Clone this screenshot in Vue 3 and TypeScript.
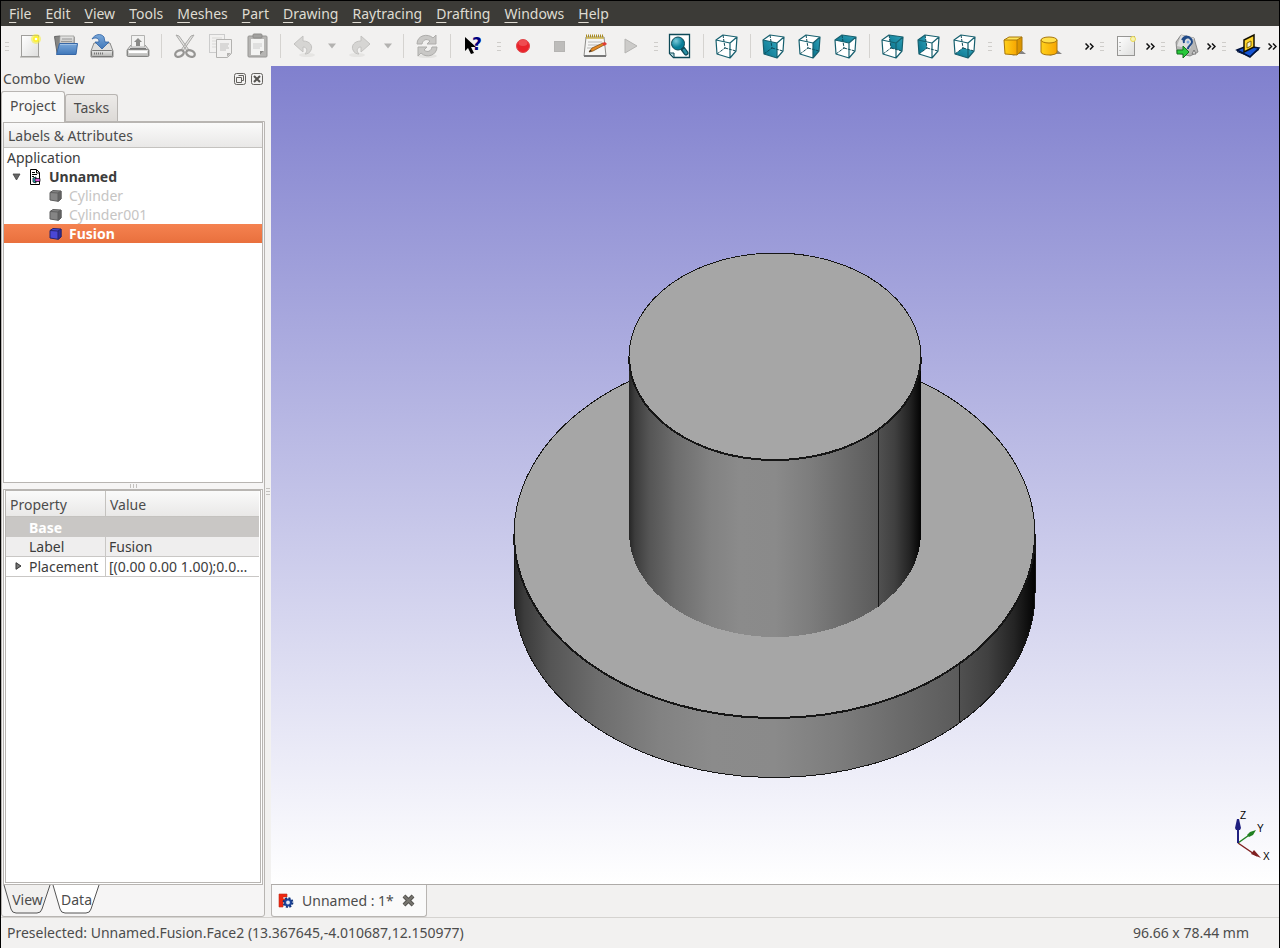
<script setup lang="ts">
import { ref } from 'vue'

type ToolKind = 'icon' | 'sep' | 'drop'
interface Tool { kind: ToolKind; name: string }
interface ToolGroup { id: string; tools: Tool[]; more?: boolean; wide?: boolean }

const menus: string[] = ['File', 'Edit', 'View', 'Tools', 'Meshes', 'Part', 'Drawing', 'Raytracing', 'Drafting', 'Windows', 'Help']

const parse = (spec: string): Tool[] =>
  spec.split(' ').map((name) => ({ kind: name === '|' ? 'sep' : name === 'v' ? 'drop' : 'icon', name }))

const groups: ToolGroup[] = [
  { id: 'file', tools: parse('new open save print | cut copy paste | undo v redo v | refresh | help') },
  { id: 'macro', tools: parse('record stop edit play') },
  { id: 'view', tools: parse('fit | axo | front right top | rear left bottom') },
  { id: 'part', tools: parse('box cylinder'), more: true, wide: true },
  { id: 'drawing', tools: parse('page'), more: true },
  { id: 'ray', tools: parse('export'), more: true },
  { id: 'draft', tools: parse('plane'), more: true }
]

const cubeFaces: Record<string, string> = {
  axo: '',
  front: '1,6 15,9 15,24 2,20',
  right: '15,9 22,3 21,17 15,24',
  top: '1,6 8,1 22,3 15,9',
  rear: '8,1 22,3 21,17 10,14',
  left: '1,6 8,1 10,14 2,20',
  bottom: '2,20 10,14 21,17 15,24'
}

const leftTab = ref<string>('Project')
const propTab = ref<string>('Data')
const expanded = ref<boolean>(true)
const selected = ref<string>('Fusion')
const parts: string[] = ['Cylinder', 'Cylinder001', 'Fusion']
</script>

<template>
  <div class="window">
    <nav class="menubar" aria-label="Main menu">
      <button v-for="m in menus" :key="m" type="button" class="menu"><span class="key">{{ m[0] }}</span>{{ m.slice(1) }}</button>
    </nav>

    <div class="toolbars">
      <div v-for="g in groups" :key="g.id" class="group" role="toolbar" :aria-label="g.id">
        <span class="handle"><i></i><i></i><i></i></span>
        <template v-for="(t, i) in g.tools" :key="i">
          <span v-if="t.kind === 'sep'" class="sep"></span>
          <button v-else-if="t.kind === 'drop'" type="button" class="drop" aria-label="History">
            <svg width="10" height="6" viewBox="0 0 10 6"><path d="M1 .5h8L5 5.5z" fill="#b3b2b0" /></svg>
          </button>
          <button v-else type="button" class="tool" :aria-label="t.name">
            <svg v-if="t.name in cubeFaces" width="24" height="25" viewBox="0 0 24 25">
              <path d="M1 6 8 1 22 3 21 17 15 24 2 20z" fill="#fff" />
              <polygon v-if="cubeFaces[t.name]" :points="cubeFaces[t.name]" fill="url(#teal)" />
              <path d="M8 1 10 14 2 20M10 14 21 17" fill="none" stroke="#0d4957" stroke-width="1" stroke-dasharray="3 1" />
              <path d="M1 6 8 1 22 3 21 17 15 24 2 20zM1 6 15 9 22 3M15 9V24" fill="none" stroke="#17606f" stroke-width="1.2" stroke-linejoin="round" />
            </svg>
            <svg v-else width="28" height="28" viewBox="0 0 28 28">
              <template v-if="t.name === 'new'">
                <path d="M4 25h20" stroke="#c9c8c5" stroke-width="2" />
                <rect x="5.500" y="3.500" width="17" height="21" fill="url(#paper)" stroke="#a09f9c" />
                <circle cx="20" cy="7" r="5" fill="#f7ef32" opacity=".55" /><circle cx="20" cy="7" r="3" fill="#fff22d" /><circle cx="20" cy="7" r="1.300" fill="#fff" />
              </template>
              <template v-else-if="t.name === 'open'">
                <path d="M2.500 4.500 8 4l1 1h13v16H5z" fill="#858583" stroke="#666" />
                <path d="M8 4h14v10H7z" fill="url(#grey)" stroke="#8a8a88" stroke-width=".7" /><path d="M10 7h10M9 9.500h11" stroke="#999" />
                <path d="M7.500 11.500H25.500L24 22.500H4.500z" fill="url(#blue)" stroke="#3767a6" stroke-linejoin="round" />
                <path d="M8 12.500H24.500" stroke="#9fc0e4" />
              </template>
              <template v-else-if="t.name === 'save'">
                <path d="m6 11h16l3 8v6H3v-6z" fill="#dfdfde" stroke="#8a8a89" stroke-linejoin="round" />
                <rect x="3.500" y="18.500" width="21" height="6" rx="1" fill="url(#grey)" stroke="#777775" />
                <path d="M6 21.500h10" stroke="#777" stroke-width="2" stroke-dasharray="1 1" />
                <path d="M4 7C7 2 13 1 16 5l1 5h4l-7 7-7-7h4c0-4-3-5-7-3z" fill="url(#blue)" stroke="#2e62a5" stroke-width=".8" />
              </template>
              <template v-else-if="t.name === 'print'">
                <path d="M7 13h14l4 5v6H3v-6z" fill="#ddd" stroke="#969694" stroke-linejoin="round" />
                <rect x="3.500" y="17.500" width="21" height="7" rx="1" fill="url(#grey)" stroke="#858583" />
                <path d="M5 20h18" stroke="#fff" stroke-width="2" />
                <path d="M7.500 3.500h13V15h-13z" fill="#f2f2f1" stroke="#b3b3b1" />
                <path d="m14 6 4 4h-2v4h-4v-4h-2z" fill="#898987" /><path d="M6 16.500h16" stroke="#777" />
              </template>
              <template v-else-if="t.name === 'cut'">
                <path d="m5 3 11 16 2-1L8 4zM23 3 12 19l-2-1L20 4z" fill="#e4e4e2" stroke="#aaa9a7" />
                <ellipse cx="8.500" cy="21.500" rx="4.500" ry="3" fill="none" stroke="#969593" stroke-width="2.300" transform="rotate(-25 8.500 21.500)" />
                <ellipse cx="19.500" cy="21.500" rx="4.500" ry="3" fill="none" stroke="#969593" stroke-width="2.300" transform="rotate(25 19.500 21.500)" />
              </template>
              <template v-else-if="t.name === 'copy'">
                <rect x="2.500" y="2.500" width="15" height="18" fill="#f2f1f0" stroke="#ccc" /><path d="M5 6h10M5 9h10M5 12h10M5 15h10" stroke="#dad9d7" />
                <path d="M9.500 7.500h15v14l-4 4h-11z" fill="#f2f1f0" stroke="#b3b2b0" /><path d="M13 12h9M13 14h8M13 16h9M13 18h6" stroke="#d1d0ce" stroke-width="1.500" /><path d="m24 21-4 4v-4z" fill="#b3b2b0" />
              </template>
              <template v-else-if="t.name === 'paste'">
                <rect x="5" y="4" width="19" height="21" rx="1" fill="#b6b5b3" stroke="#979694" />
                <path d="M8 7h13v12l-4 4H8z" fill="#f3f3f2" /><path d="M10 12h9M10 14h9M10 16h7" stroke="#ccc" /><path d="m21 19-4 4v-4z" fill="#8d8c8a" />
                <rect x="10" y="2" width="9" height="4" rx="1" fill="#a2a19f" stroke="#8d8c8a" />
              </template>
              <template v-else-if="t.name === 'undo' || t.name === 'redo'">
                <g :class="{ flip: t.name === 'redo' }">
                  <ellipse cx="17" cy="23" rx="8" ry="2" fill="#e6e5e3" />
                  <path d="m4 12 9-8v5c7 0 10 5 8 9-1 3-4 4-6 4 3-3 2-7-2-7v5z" fill="#d6d5d3" stroke="#c3c2c0" stroke-linejoin="round" />
                </g>
              </template>
              <template v-else-if="t.name === 'refresh'">
                <ellipse cx="14" cy="24" rx="10" ry="2" fill="#e4e3e1" />
                <path d="M4 12C4 3 15 1 20 6l3-3v9h-9l3-3c-4-3-7-1-8 3z" fill="#c9c8c6" stroke="#aeadab" />
                <path d="M24 15c0 8-10 12-16 6l-3 3v-9h9l-3 3c4 3 7 1 8-3z" fill="#c9c8c6" stroke="#aeadab" />
              </template>
              <template v-else-if="t.name === 'help'">
                <path d="M5 5v14l3-3 3 6 3-1-3-6h5z" fill="#000" />
                <text x="12" y="18" class="q">?</text>
              </template>
              <template v-else-if="t.name === 'record'">
                <circle cx="14" cy="14" r="6.500" fill="#e9232b" stroke="#e0474b" /><ellipse cx="14" cy="11" rx="4.500" ry="3" fill="#f4686b" opacity=".6" />
              </template>
              <rect v-else-if="t.name === 'stop'" x="9.500" y="9.500" width="10" height="10" fill="#bdbcba" stroke="#b5b4b2" />
              <template v-else-if="t.name === 'edit'">
                <path d="M5 5h18l2 19H3z" fill="#f5f5f4" stroke="#8c8b88" /><path d="M3 24h22" stroke="#777" stroke-width="2" />
                <path d="M5 4h18" stroke="#a88a22" stroke-width="3" stroke-dasharray="1 1" /><path d="M5 6h18" stroke="#ccb34b" stroke-width="1.500" />
                <path d="M7 10h14M7 13h12M6 16h6" stroke="#b9b9b8" />
                <path d="m8 20 3-4 11-5 1 2-11 6z" fill="#e78a22" stroke="#83521a" stroke-width=".8" /><path d="m21 11 3-1 2 2-3 2z" fill="#df3c35" /><path d="m8 20 1-2 2 1z" fill="#222" />
              </template>
              <path v-else-if="t.name === 'play'" d="m8 7 12 7-12 7z" fill="#cccbc9" stroke="#b5b4b2" stroke-linejoin="round" />
              <template v-else-if="t.name === 'fit'">
                <path d="M3.500 2.500h20v23h-16l-4-4z" fill="#fff" stroke="#0d4957" stroke-width="1.300" /><path d="M3 21h5v5z" fill="#b5d6dd" stroke="#0d4957" />
                <path d="m17 17 3 4" stroke="#0d4957" stroke-width="5" stroke-linecap="round" /><path d="m18 18 2 3" stroke="#2990a5" stroke-width="2.500" stroke-linecap="round" />
                <circle cx="12" cy="11.500" r="6.500" fill="url(#lens)" stroke="#0d4957" />
              </template>
              <template v-else-if="t.name === 'box'">
                <path d="m12 24 7-2h7l-5-4z" fill="#696866" opacity=".8" />
                <path d="M4 8h13v15L5 22z" fill="url(#gold)" /><path d="m4 8 5-3h13l-5 3z" fill="#ffe55a" /><path d="m17 8 5-3v13l-5 5z" fill="#dc9500" />
                <path d="M4 8 9 5h13v13l-5 5-12-1zM4 8h13v15M17 8l5-3" fill="none" stroke="#a8760a" stroke-linejoin="round" />
              </template>
              <template v-else-if="t.name === 'cylinder'">
                <path d="m13 24 7-2h6l-5-4z" fill="#696866" opacity=".8" />
                <path d="M5 8v12c0 4 16 4 16 0V8z" fill="url(#gold)" stroke="#a8760a" /><ellipse cx="13" cy="8" rx="8" ry="3" fill="#ffe04c" stroke="#a8760a" />
              </template>
              <template v-else-if="t.name === 'page'">
                <rect x="5.500" y="4.500" width="17" height="19" fill="url(#paper)" stroke="#979694" /><path d="M8 10v1M8 14v1M8 18v1" stroke="#888" />
                <circle cx="21" cy="7" r="2.500" fill="#f7f3b4" stroke="#ead951" />
              </template>
              <template v-else-if="t.name === 'export'">
                <path d="M8 3 21 6l4 14-8 4L4 21 3 10z" fill="#b7b7b6" stroke="#777" stroke-width=".8" /><path d="m8 3 13 3-4 11L4 14z" fill="#dedede" />
                <path d="M11 11c-2-6 8-8 8-1 0 3-4 3-4 7M9 8c3-5 8-4 9 0" fill="none" stroke="#204a87" stroke-width="2" /><circle cx="15" cy="10" r="1.500" fill="#7aa5db" />
                <path d="m19 22 2-4 2 4z" fill="#eee" stroke="#777" />
                <path d="M4 18h6v-4l6 6-6 6v-4H4z" fill="#27c83a" stroke="#14701f" />
              </template>
              <template v-else-if="t.name === 'plane'">
                <path d="m3 18 10-4 12 2-9 9z" fill="#1554d4" stroke="#00113a" stroke-width="1.500" /><path d="m3 19 13 5 9-8v2l-9 7-13-5z" fill="#001640" />
                <path d="M10 8 20 3v12l-10 5z" fill="#ffd52b" stroke="#171300" stroke-width="1.500" /><path d="m13 11 4-2v5l-4 2z" fill="#f2f0dc" stroke="#806600" />
              </template>
            </svg>
          </button>
        </template>
        <button v-if="g.more" type="button" class="more" :class="{ wide: g.wide }" aria-label="More tools">
          <svg width="9" height="7" viewBox="0 0 9 7"><path d="m.5.500 3 3-3 3M5 .500l3 3-3 3" fill="none" stroke="#111" stroke-width="1.500" /></svg>
        </button>
      </div>
    </div>

    <div class="body">
      <aside class="combo">
        <header class="dockhead">
          <h2>Combo View</h2>
          <button type="button" class="dockbtn" aria-label="Float"><svg width="12" height="12" viewBox="0 0 12 12"><rect x=".5" y=".5" width="11" height="11" rx="2" fill="none" stroke="#65635f" /><path d="M4.500 2.500h5v5h-2M2.500 4.500h5v5h-5z" fill="none" stroke="#65635f" /></svg></button>
          <button type="button" class="dockbtn" aria-label="Close"><svg width="12" height="12" viewBox="0 0 12 12"><rect x=".5" y=".5" width="11" height="11" rx="2" fill="none" stroke="#65635f" /><path d="m3 3 6 6M9 3 3 9" stroke="#55534f" stroke-width="2" /></svg></button>
        </header>
        <div class="tabs" role="tablist">
          <button v-for="t in ['Project', 'Tasks']" :key="t" type="button" role="tab" class="tab" :class="{ on: leftTab === t }" :aria-selected="leftTab === t" @click="leftTab = t">{{ t }}</button>
        </div>
        <div class="pane">
          <section class="tree">
            <div class="colhead">Labels &amp; Attributes</div>
            <ul role="tree">
              <li role="treeitem" class="row root">Application</li>
              <li role="treeitem" class="row doc" :aria-expanded="expanded">
                <button type="button" class="twist" aria-label="Toggle Unnamed" @click="expanded = !expanded"><svg width="9" height="8" viewBox="0 0 9 8"><path d="M1 1h7L4.500 7z" fill="#666" stroke="#444" stroke-width=".8" /></svg></button>
                <svg width="12" height="16" viewBox="0 0 12 16"><path d="M1.500.500h6l3 3v12h-9z" fill="#fff" stroke="#000" /><path d="M7.500 1v3h3M3 3.500h3M3 5.500h5M3 7.500h2" fill="none" stroke="#000" /><path d="M7 8 4 9v4l3 1z" fill="#31c4cf" stroke="#000" stroke-width=".7" /><path d="M6 9.500h5v3H6z" fill="#db58dc" stroke="#000" stroke-width=".7" /></svg>
                <b>Unnamed</b>
              </li>
              <template v-if="expanded">
                <li v-for="p in parts" :key="p" role="treeitem" class="row part" :class="{ selected: selected === p }" :aria-selected="selected === p" @click="selected = p">
                  <svg width="13" height="12" viewBox="0 0 13 12" :class="{ solid: p === 'Fusion' }" class="cube"><path d="m1 2.500 3-2 8 .5V9l-3 2.300L1 10z" /><path class="side" d="m9 3 3-2v8l-3 2.300z" /><path d="m1 2.500 8 .500" /></svg>
                  <span>{{ p }}</span>
                </li>
              </template>
            </ul>
          </section>
          <div class="splitter"><i></i><i></i><i></i></div>
          <section class="props">
            <table>
              <thead><tr><th scope="col">Property</th><th scope="col">Value</th></tr></thead>
              <tbody>
                <tr class="cat"><th colspan="2" scope="rowgroup">Base</th></tr>
                <tr class="alt"><td>Label</td><td>Fusion</td></tr>
                <tr><td><button type="button" class="expand" aria-label="Expand Placement"><svg width="7" height="8" viewBox="0 0 7 8"><path d="M1 .700 6 4 1 7.300z" fill="#777" stroke="#333" /></svg></button>Placement</td><td>[(0.00 0.00 1.00);0.0…</td></tr>
              </tbody>
            </table>
          </section>
          <div class="lowtabs" role="tablist">
            <button v-for="t in ['View', 'Data']" :key="t" type="button" role="tab" class="low" :class="{ on: propTab === t }" :aria-selected="propTab === t" @click="propTab = t">
              <svg width="48" height="30" viewBox="0 0 48 30"><path class="shape" d="M1 0 8 24q1 4 5 4h21q4 0 5-4L47 0" /></svg>
              <span>{{ t }}</span>
            </button>
          </div>
        </div>
      </aside>
      <div class="vsplit"><i></i><i></i><i></i></div>

      <main class="work">
        <div class="scene">
          <svg class="model" viewBox="271 66 1008 818" role="img" aria-label="Fusion of two cylinders">
            <defs>
              <linearGradient id="wall" x1="0" x2="1">
                <stop offset="0" stop-color="#262626" /><stop offset=".02" stop-color="#3c3c3c" /><stop offset=".07" stop-color="#555" /><stop offset=".16" stop-color="#6d6d6d" />
                <stop offset=".28" stop-color="#828282" /><stop offset=".38" stop-color="#8b8b8b" /><stop offset=".5" stop-color="#8a8a8a" />
                <stop offset=".62" stop-color="#7d7d7d" /><stop offset=".74" stop-color="#6b6b6b" /><stop offset=".853" stop-color="#5b5b5b" />
                <stop offset=".856" stop-color="#505050" /><stop offset=".91" stop-color="#404040" /><stop offset=".96" stop-color="#242424" /><stop offset="1" stop-color="#030303" />
              </linearGradient>
              <linearGradient id="teal" x1="1" y1="0" x2="0" y2="1"><stop offset="0" stop-color="#2fa3bb" /><stop offset="1" stop-color="#08718a" /></linearGradient>
              <radialGradient id="lens" cx=".35" cy=".3"><stop offset="0" stop-color="#7acadb" /><stop offset="1" stop-color="#087e98" /></radialGradient>
              <linearGradient id="paper" x1="0" y1="0" x2="1" y2="1"><stop offset="0" stop-color="#fff" /><stop offset="1" stop-color="#dededd" /></linearGradient>
              <linearGradient id="grey" x2="0" y2="1"><stop offset="0" stop-color="#e8e8e7" /><stop offset="1" stop-color="#b3b3b1" /></linearGradient>
              <linearGradient id="blue" x2="0" y2="1"><stop offset="0" stop-color="#7aa8da" /><stop offset="1" stop-color="#3f77b9" /></linearGradient>
              <linearGradient id="gold"><stop offset="0" stop-color="#ffd21c" /><stop offset="1" stop-color="#f7a500" /></linearGradient>
            </defs>
            <g shape-rendering="crispEdges">
              <path d="M514 534V593A260.500 184.500 0 0 0 1035 593V534z" fill="url(#wall)" stroke="#161616" />
              <ellipse cx="774.500" cy="534" rx="260.500" ry="184" fill="#a6a6a6" stroke="#161616" />
              <path d="M514 534A260.500 184 0 0 0 1035 534" fill="none" stroke="#161616" stroke-width="2" />
              <path d="M959.500 664V723" stroke="#161616" />
              <path d="M629 356V533A146 104 0 0 0 921 533V356z" fill="url(#wall)" />
              <ellipse cx="775" cy="356.500" rx="146" ry="103.500" fill="#a6a6a6" stroke="#161616" />
              <path d="M629 356.500A146 103.500 0 0 0 921 356.500" fill="none" stroke="#161616" stroke-width="2" />
              <path d="M878.500 430V607" stroke="#161616" />
            </g>
          </svg>
          <svg class="axes" width="44" height="58" viewBox="0 0 44 58" aria-label="Axis cross">
            <path d="M7 33 26 46" stroke="#802020" stroke-width="1.500" /><path d="m20 44 3-4 7 8z" fill="#802020" />
            <path d="m7 33 14-10" stroke="#208020" stroke-width="1.500" /><path d="m16 25 3-3 6-2-3 5-4 2z" fill="#208020" />
            <path d="M7 33V11" stroke="#202080" stroke-width="2" /><path d="M4 18 6 9h2l2 9-1 2H5z" fill="#202080" />
            <text x="9" y="9">Z</text><text x="26" y="22">Y</text><text x="32" y="50">X</text>
          </svg>
        </div>
        <div class="doctabs">
          <div class="doctab">
            <svg width="16" height="16" viewBox="0 0 16 16"><path d="M1 1h8v3H5v2h4v3H5v5H1z" fill="#f0260f" stroke="#b8301f" stroke-width=".6" /><circle cx="10" cy="9.500" r="3" fill="#e4e9f6" stroke="#1d469c" stroke-width="2.200" /><circle cx="10" cy="9.500" r="4.500" fill="none" stroke="#12347c" stroke-width="1.800" stroke-dasharray="2 1.530" /></svg>
            <a href="#unnamed">Unnamed : 1*</a>
            <button type="button" class="close" aria-label="Close document"><svg width="13" height="13" viewBox="0 0 13 13"><path d="m2 2 9 9M11 2l-9 9" stroke="#555450" stroke-width="4" /><path d="m2 2 9 9M11 2l-9 9" stroke="#77756f" stroke-width="2" /></svg></button>
          </div>
        </div>
      </main>
    </div>

    <footer class="status">
      <span>Preselected: Unnamed.Fusion.Face2 (13.367645,-4.010687,12.150977)</span>
      <span class="dims">96.66 x 78.44 mm</span>
    </footer>
  </div>
</template>

<style>
html, body { margin: 0; background: #000; }
</style>

<style scoped>
.window { box-sizing: border-box; min-height: 100vh; display: flex; flex-direction: column; border: 1px solid #000; background: #f2f1f0; color: #4c4c4c; font: 14px/19px "Noto Sans", "Open Sans", sans-serif; }
button { margin: 0; padding: 0; border: 0; background: none; color: inherit; font: inherit; }
svg { display: block; flex: none; }
.menubar { display: flex; height: 25px; padding-left: 1px; background: #3c3b37; color: #dfdbd2; }
.menu { padding: 0 7px; line-height: 24px; }
.key { text-decoration: underline; text-decoration-thickness: 1px; text-underline-offset: 3px; }
.toolbars { display: flex; height: 40px; overflow: hidden; }
.group { display: flex; align-items: center; }
.handle { width: 13px; display: flex; flex-direction: column; align-items: center; gap: 3px; }
.group:first-child .handle { width: 11px; }
.handle i { width: 4px; height: 1px; background: #cfcdca; }
.tool { width: 36px; height: 36px; display: flex; align-items: center; justify-content: center; }
.sep { width: 1px; height: 24px; margin: 0 5px; background: #d5d3d0; }
.drop { width: 20px; display: flex; justify-content: center; }
.more { width: 12px; display: flex; justify-content: center; }
.more.wide { margin-left: 15px; }
.flip { transform: matrix(-1, 0, 0, 1, 28, 0); }
.q { font: bold 17px "DejaVu Sans", sans-serif; fill: #000080; }
.body { flex: 1; display: flex; min-height: 0; }
.combo { width: 264px; display: flex; flex-direction: column; }
.dockhead { display: flex; align-items: center; height: 25px; padding: 0 2px; gap: 5px; }
.dockhead h2 { flex: 1; margin: 0; font-size: 14px; font-weight: 400; }
.tabs { display: flex; align-items: flex-end; height: 30px; }
.tab { box-sizing: border-box; height: 27px; padding: 0 8px 2px; border: 1px solid #b8b5b2; border-bottom: 0; border-radius: 3px 3px 0 0; background: linear-gradient(#eceae8, #dddad7); }
.tab.on { height: 31px; margin-bottom: -1px; padding-bottom: 4px; background: #f9f9f8; position: relative; }
.pane { flex: 1; display: flex; flex-direction: column; border: 1px solid #b8b5b2; border-radius: 0 0 3px 3px; padding: 0 1px; background: #f6f5f5; }
.tree { height: 359px; border: 1px solid #b8b5b2; background: #fff; }
.colhead { box-sizing: border-box; height: 25px; padding: 3px 4px 2px; border-bottom: 1px solid #c4c2bf; background: linear-gradient(#fafafa, #e9e8e7); }
ul { margin: 0; padding: 0; list-style: none; }
.row { display: flex; align-items: center; height: 19px; color: #3c3c3c; }
.root { padding-left: 3px; }
.doc { padding-left: 8px; gap: 8px; }
.part { padding-left: 45px; gap: 7px; color: #c6c5c4; }
.part.selected { background: linear-gradient(#f58250, #e9703d); color: #fff; font-weight: 700; }
.cube { fill: #858585; stroke: #5e5e5e; }
.cube .side { fill: #636363; }
.cube.solid { fill: #4a47d6; stroke: #26246e; }
.cube.solid .side { fill: #2f2d9c; }
.splitter { height: 6px; display: flex; align-items: center; justify-content: center; gap: 2px; }
.splitter i { width: 1px; height: 4px; background: #c3c1be; }
.props { flex: 1; padding-right: 1px; border: 3px double #b8b5b2; border-width: 2px 3px 3px; background: #fff; }
table { width: 100%; table-layout: fixed; border-collapse: separate; border-spacing: 0; color: #3c3c3c; }
thead th { height: 26px; box-sizing: border-box; padding: 2px 4px 0; border-bottom: 1px solid #c4c2bf; background: linear-gradient(#fafafa, #e9e8e7); font-weight: 400; text-align: left; color: #4c4c4c; }
thead th:first-child { width: 100px; border-right: 1px solid #c4c2bf; }
tbody th, td { box-sizing: border-box; height: 20px; padding: 0 3px; white-space: nowrap; text-align: left; }
.cat th { padding-left: 23px; background: #c9c7c5; color: #fff; }
td { border-bottom: 1px solid #c9c7c5; }
td:first-child { position: relative; padding: 0 0 0 23px; border-right: 1px solid #c9c7c5; }
.alt td { background: #efeeee; }
.expand { position: absolute; left: 9px; top: 5px; }
.lowtabs { display: flex; height: 31px; }
.low { position: relative; width: 49px; height: 30px; padding-bottom: 2px; }
.low svg { position: absolute; inset: 0; }
.low span { position: relative; }
.shape { fill: #f1f0ef; stroke: #555; }
.on .shape { fill: #fff; }
.vsplit { width: 6px; display: flex; flex-direction: column; align-items: center; justify-content: center; gap: 2px; }
.vsplit i { width: 4px; height: 1px; background: #c3c1be; }
.work { flex: 1; min-width: 0; display: flex; flex-direction: column; }
.scene { position: relative; flex: 1; min-height: 0; background: linear-gradient(#8080ce, #fff); }
.model { width: 100%; height: 100%; }
.axes { position: absolute; right: 4px; bottom: 16px; }
.axes text { font: 10px "Liberation Sans", sans-serif; fill: #000; }
.doctabs { display: flex; height: 32px; border-top: 1px solid #aeaba8; }
.doctab { box-sizing: border-box; height: 32px; padding: 0 11px 0 6px; display: flex; align-items: center; gap: 8px; border: 1px solid #b8b5b2; border-top: 0; border-radius: 0 0 3px 3px; background: #fafafa; }
.doctab a { color: inherit; text-decoration: none; }
.status { box-sizing: border-box; display: flex; justify-content: space-between; align-items: center; height: 31px; padding: 0 30px 2px 6px; border-top: 1px solid #d5d3d0; }
</style>
